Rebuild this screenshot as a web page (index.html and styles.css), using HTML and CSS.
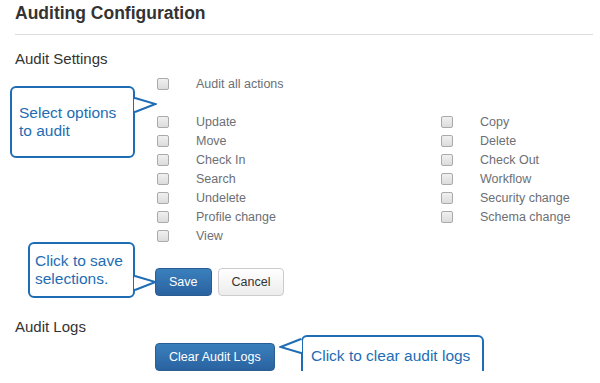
FILE: index.html
```html
<!DOCTYPE html>
<html>
<head>
    <title>Auditing Configuration</title>
    <link rel="stylesheet" href="styles.css">
</head>
<body>
    <h1 class="page-title">Auditing Configuration</h1>
    <hr class="rule">

    <h2 class="section-title">Audit Settings</h2>
    <div class="options">
        <label class="option option-all"><input type="checkbox"> Audit all actions</label>
        <div class="option-cols">
            <div class="option-col">
                <label class="option"><input type="checkbox"> Update</label>
                <label class="option"><input type="checkbox"> Move</label>
                <label class="option"><input type="checkbox"> Check In</label>
                <label class="option"><input type="checkbox"> Search</label>
                <label class="option"><input type="checkbox"> Undelete</label>
                <label class="option"><input type="checkbox"> Profile change</label>
                <label class="option"><input type="checkbox"> View</label>
            </div>
            <div class="option-col">
                <label class="option"><input type="checkbox"> Copy</label>
                <label class="option"><input type="checkbox"> Delete</label>
                <label class="option"><input type="checkbox"> Check Out</label>
                <label class="option"><input type="checkbox"> Workflow</label>
                <label class="option"><input type="checkbox"> Security change</label>
                <label class="option"><input type="checkbox"> Schema change</label>
            </div>
        </div>
    </div>
    <div class="actions">
        <button class="btn btn-primary">Save</button>
        <button class="btn btn-default">Cancel</button>
    </div>

    <h2 class="section-title logs-title">Audit Logs</h2>
    <div class="actions logs-actions">
        <button class="btn btn-primary">Clear Audit Logs</button>
    </div>

    <!-- help callouts -->
    <div class="callout callout-options">
        <div>Select options<br>to audit</div>
        <svg class="pointer pointer-right" width="25" height="18" viewBox="0 0 25 18">
            <polygon points="2,3 23.5,8 2,15" fill="#fff"/>
            <polyline points="3,2 23.5,8 3,16" fill="none" stroke="#1e6db4" stroke-width="2"/>
        </svg>
    </div>
    <div class="callout callout-save">
        <div>Click to save<br>selections.</div>
        <svg class="pointer pointer-right" width="25" height="18" viewBox="0 0 25 18">
            <polygon points="2,3 23.5,8 2,15" fill="#fff"/>
            <polyline points="3,2 23.5,8 3,16" fill="none" stroke="#1e6db4" stroke-width="2"/>
        </svg>
    </div>
    <div class="callout callout-logs">
        <div>Click to clear audit logs</div>
        <svg class="pointer pointer-left" width="25" height="18" viewBox="0 0 25 18">
            <polygon points="23,3 1.5,10 23,15" fill="#fff"/>
            <polyline points="22,2 1.5,10 22,16" fill="none" stroke="#1e6db4" stroke-width="2"/>
        </svg>
    </div>
</body>
</html>
```

FILE: styles.css
```css
body {
    font-family: "Liberation Sans", Arial, sans-serif;
    margin: 0;
    padding: 0 7px 0 15px;
    position: relative;
    color: #333;
    background: #fff;
}
.page-title {
    font-size: 17.5px;
    font-weight: bold;
    line-height: 24px;
    margin: 0;
    padding-top: 1px;
}
.rule {
    margin: 9px 0 0;
    border: 0;
    border-top: 1px solid #ddd;
}
.section-title {
    font-size: 15px;
    font-weight: normal;
    line-height: 20px;
    margin: 14px 0 0;
}
.options {
    margin: 5px 0 0 140px;
}
.option-cols {
    display: flex;
    margin-top: 19px;
}
.option-col {
    display: flex;
    flex-direction: column;
}
.option-col:first-child {
    flex: none;
    width: 284px;
}
.option {
    height: 19px;
    display: flex;
    align-items: center;
    padding-left: 2px;
    font-size: 12.5px;
    color: #6c6f75;
}
.option input {
    appearance: none;
    -webkit-appearance: none;
    width: 12px;
    height: 12px;
    margin: 0 27px 0 0;
    border: 1px solid #aaa;
    border-radius: 2px;
    background: linear-gradient(#f0f0f0, #dcdcdc);
}
.actions {
    display: flex;
    gap: 6px;
    margin: 23px 0 0 140px;
}
.btn {
    height: 28px;
    padding: 0 13px;
    font-family: "Liberation Sans", Arial, sans-serif;
    font-size: 12.5px;
    border-radius: 4px;
    border: 1px solid;
    cursor: pointer;
}
.btn-primary {
    color: #fff;
    background: linear-gradient(#3a80bd, #2a62a0);
    border-color: #2a5d91;
}
.btn-default {
    color: #333;
    background: linear-gradient(#fff, #ececec);
    border-color: #ccc;
}
.logs-title {
    margin-top: 21px;
}
.logs-actions {
    margin-top: 6px;
}
.callout {
    position: absolute;
    box-sizing: border-box;
    border: 2px solid #1e6db4;
    border-radius: 6px;
    background: #fff;
    color: #1e6db4;
    font-size: 15.5px;
    line-height: 18px;
    display: flex;
    align-items: center;
}
.callout-options {
    left: 10px;
    top: 86px;
    width: 125px;
    height: 72px;
    padding-left: 7px;
}
.callout-save {
    left: 28px;
    top: 242px;
    width: 107px;
    height: 56px;
    padding-left: 5px;
}
.callout-logs {
    left: 301px;
    top: 335px;
    width: 183px;
    height: 41px;
    padding-left: 8px;
}
.pointer {
    position: absolute;
}
.pointer-right {
    right: -24px;
}
.callout-options .pointer-right {
    top: 8px;
}
.callout-save .pointer-right {
    top: 30px;
}
.pointer-left {
    left: -24px;
    top: 0;
}
```
